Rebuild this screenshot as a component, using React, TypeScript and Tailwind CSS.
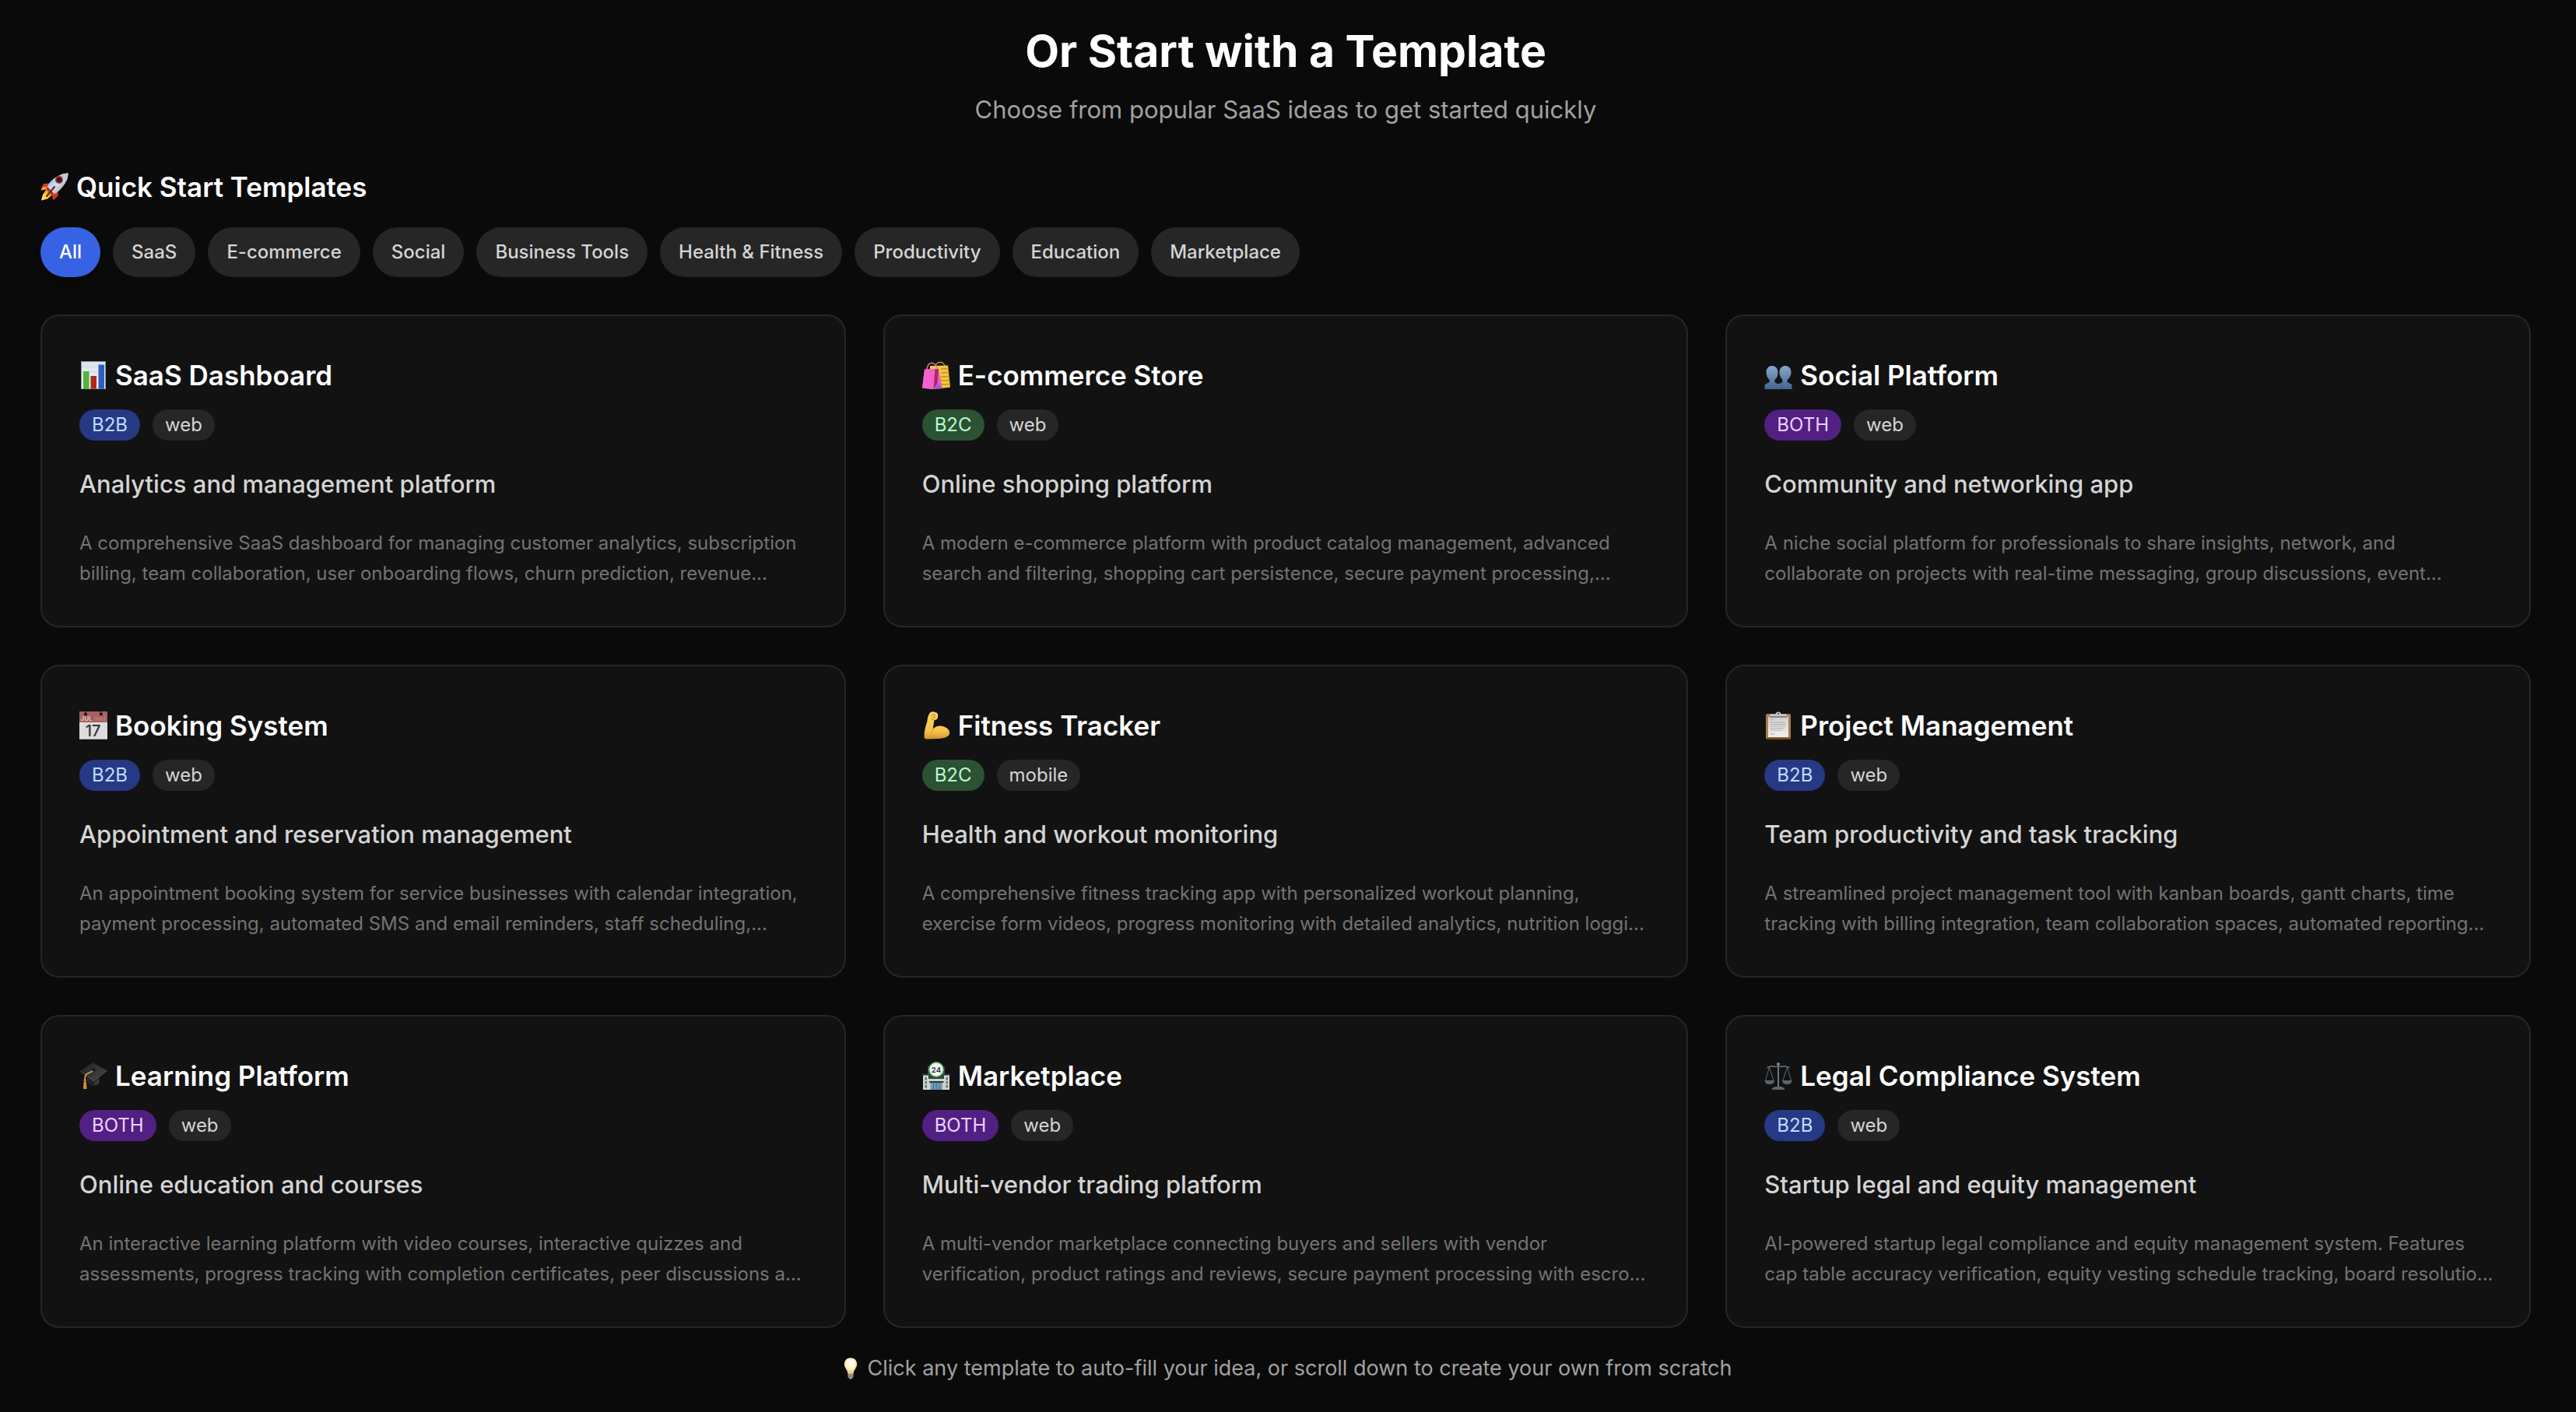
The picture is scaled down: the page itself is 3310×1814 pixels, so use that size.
import { useState } from 'react';
import type { ReactNode } from 'react';

type Audience = 'B2B' | 'B2C' | 'BOTH';

type Template = {
  icon: ReactNode;
  title: string;
  audience: Audience;
  platform: string;
  tagline: string;
  summary: [string, string];
};

function Emoji({ size = 'size-9', children }: { size?: 'size-9' | 'size-7'; children: ReactNode }) {
  return (
    <svg viewBox="0 0 36 36" aria-hidden="true" className={size === 'size-9' ? 'size-9 shrink-0' : 'size-7 shrink-0'}>
      {children}
    </svg>
  );
}

const Rocket = () => (
  <Emoji>
    <defs>
      <linearGradient id="rocketBody" x1="0" y1="0" x2="1" y2="1">
        <stop offset="0" stopColor="#5d9be0" />
        <stop offset="0.5" stopColor="#d5e2ef" />
        <stop offset="1" stopColor="#77808c" />
      </linearGradient>
      <linearGradient id="rocketFlame" x1="1" y1="0" x2="0" y2="1">
        <stop offset="0" stopColor="#e2501c" />
        <stop offset="0.5" stopColor="#f9c22b" />
        <stop offset="1" stopColor="#fff08a" />
      </linearGradient>
    </defs>
    <path d="M13 13.5 4 14 0.5 22.5 8.5 21Z" fill="#e03a20" />
    <path d="M0.5 22.5 2.5 18 9 18.5 8.5 21Z" fill="#f3a02c" />
    <path d="M22 21.500 23 29 16.500 35.500 14.500 27Z" fill="#d8301d" />
    <path d="M7.500 21 3 28 1 35.500 9 33.500 15 28.500Z" fill="url(#rocketFlame)" />
    <path d="M35.500 0.500C27 0.500 16 6 10 15L7.500 20.500 15 28.500 21 25.500C30 18.500 35.500 9 35.500 0.500Z" fill="url(#rocketBody)" />
    <path d="M35.500 0.500C31.500 0.500 28 1.500 25 3L33.500 10.500C35 7 35.500 3.500 35.500 0.500Z" fill="#b9cbe0" />
    <path d="M15 28.500 7.500 20.500 9 18 17.500 27Z" fill="#98312a" />
    <path d="M18 18 8 30" stroke="#7d2018" strokeWidth="2.200" strokeLinecap="round" />
    <circle cx="24" cy="9" r="5" fill="#b52a24" />
    <circle cx="24" cy="9" r="3.200" fill="#241f2b" />
  </Emoji>
);

const Chart = () => (
  <Emoji>
    <defs>
      <linearGradient id="chartPaper" x1="0" y1="0" x2="0" y2="1">
        <stop offset="0" stopColor="#d9e1ea" />
        <stop offset="1" stopColor="#f4f7fa" />
      </linearGradient>
    </defs>
    <rect x="2.500" y="0.500" width="31" height="35" fill="url(#chartPaper)" stroke="#8e959d" strokeWidth="1" />
    <path d="M3 7h30M3 14h30M3 21h30M3 28h30" stroke="#c5cfda" strokeWidth="0.600" />
    <rect x="5" y="13" width="7.500" height="22.500" fill="#50b53c" />
    <rect x="14.500" y="19" width="7.500" height="16.500" fill="#b3271d" />
    <rect x="24.500" y="4.500" width="7.500" height="31" fill="#2c5fc4" />
  </Emoji>
);

const Bags = () => (
  <Emoji>
    <path d="M17 8C17 -1 29 -1 29 8" fill="none" stroke="#c99a35" strokeWidth="1.500" />
    <path d="M10 6 33 5.500 36 33.500 24 35 10 30Z" fill="#f0c93c" />
    <path d="M24 10 34 9.500M24 15 34.500 14.500M24 20 35 19.500M24 25 35.500 24.500M25 30 36 29.500" stroke="#c78e2e" strokeWidth="1.400" />
    <path d="M6 12C6 -1 18 -1 20 12" fill="none" stroke="#d87fae" strokeWidth="1.500" />
    <path d="M3 10.500 21 10 26 35 14 36 0 34.500Z" fill="#ec5cc5" />
    <path d="M3 10.500 16.500 10 14.500 36 0 34.500Z" fill="#f55fcd" />
    <path d="M16.500 10 21 10 19.500 28 14.500 36Z" fill="#a92a68" />
    <path d="M14.500 36 19.500 28 26 35Z" fill="#a15fc4" />
    <path d="M2.500 16h12M2 21h12M1.500 26h12M1 31h12" stroke="#fa86d8" strokeWidth="0.700" strokeDasharray="1 2" />
  </Emoji>
);

const People = () => (
  <Emoji>
    <defs>
      <linearGradient id="bust" x1="0" y1="0" x2="0" y2="1">
        <stop offset="0" stopColor="#86a8c9" />
        <stop offset="1" stopColor="#41658f" />
      </linearGradient>
    </defs>
    <path d="M27 6C22.500 6 19.500 9.500 19.500 14.500 19.500 19 21.500 22 23.500 24L23 27.500 15 30V36H35.500V30.500C34 28.500 31 28 29.500 27L29.500 24C32 22 34.500 19 34.500 14.500 34.500 9.500 31.500 6 27 6Z" fill="url(#bust)" />
    <path d="M10 6C5.500 6 2.500 9.500 2.500 14.500 2.500 19 4.500 22 6.500 24V27C4.500 28.500 2 28.500 0.500 30.500V36H23V31.500C20 29 15.500 29 13.500 27V24C16 22 17.500 19 17.500 14.500 17.500 9.500 14.500 6 10 6Z" fill="url(#bust)" />
    <path d="M20.500 29.500 23 32.500V36" fill="none" stroke="#365579" strokeWidth="0.800" />
  </Emoji>
);

const Calendar = () => (
  <Emoji>
    <rect width="36" height="36" fill="#dcdcdc" />
    <rect width="36" height="14" fill="#a86060" />
    <path d="M0 35.500H36" stroke="#a9a9a9" />
    <circle cx="8" cy="3.500" r="2" fill="#171010" />
    <circle cx="28" cy="3.500" r="2" fill="#171010" />
    <path d="M8 0v3M26 0l2 3" stroke="#171010" strokeWidth="1" />
    <text x="1.500" y="12" fontFamily="Inter, sans-serif" fontSize="8" fontWeight="600" fill="#e0c7c7">JUL</text>
    <path d="M20 7v5M22.500 7v5M25 7v5M27.500 7v5M30 7v5M32.500 5.500v6.500" stroke="#c08e8e" strokeWidth="0.800" />
    <text x="17.500" y="32" textAnchor="middle" fontFamily="Inter, sans-serif" fontSize="20" fontWeight="500" fill="#333333">17</text>
  </Emoji>
);

const Arm = () => (
  <Emoji>
    <defs>
      <linearGradient id="skin" x1="0" y1="0" x2="0" y2="1">
        <stop offset="0" stopColor="#fbd567" />
        <stop offset="0.700" stopColor="#f5c54b" />
        <stop offset="1" stopColor="#d3932c" />
      </linearGradient>
    </defs>
    <path d="M9 3C10.500 0.500 13 0 15 0.500L19.500 2C20.500 5 20.500 8 19 10L15.500 11.500C15 15 14 18 14 22.500 17 19 22 17.500 26.500 19 32.500 20.500 36 25 35 29 33.500 33.500 27 34.500 21 35L6 35.500C3.500 35.500 2.500 34.500 2.500 32 2.500 25 4.500 18 6.500 12.500 6.500 9 7.500 6 9 3Z" fill="url(#skin)" />
    <path d="M11.500 5C13 3.500 15 3.500 16.500 4.500M13.500 7.500C15 6 17 6.500 17.500 8M15.500 11C14 11 12.500 10.500 12 9" fill="none" stroke="#b5751d" strokeWidth="1" strokeLinecap="round" />
    <path d="M14 22.500C13.500 24.500 12.500 26 11.500 27" fill="none" stroke="#cf9130" strokeWidth="1" strokeLinecap="round" />
  </Emoji>
);

const Clipboard = () => (
  <Emoji>
    <defs>
      <linearGradient id="sheet" x1="0" y1="0" x2="0" y2="1">
        <stop offset="0" stopColor="#cfcfcf" />
        <stop offset="1" stopColor="#f1f1f1" />
      </linearGradient>
    </defs>
    <rect x="2" y="3" width="32" height="33" rx="2" fill="#a97f48" />
    <path d="M3 33.500H33V34.500C33 35.500 32.500 36 31.500 36H4.500C3.500 36 3 35.500 3 34.500Z" fill="#75501f" />
    <rect x="5" y="6.500" width="26" height="26.500" fill="url(#sheet)" />
    <path d="M7.500 14h19M7.500 16.500h20M7.500 19h20M7.500 21.500h18M7.500 24h16M7.500 10.500h4M7.500 29h6" stroke="#a9a9a9" strokeWidth="0.900" />
    <path d="M7 5.500C7 4 8 3.500 9.500 3.500H14.500C15 1.500 16 0.500 18 0.500S21 1.500 21.500 3.500H26.500C28 3.500 29 4 29 5.500V7.500H7Z" fill="#c3c7cf" />
    <path d="M7 7H29" stroke="#77695f" strokeWidth="1.500" />
    <circle cx="18" cy="2.800" r="1" fill="#3f4552" />
  </Emoji>
);

const GraduationCap = () => (
  <Emoji>
    <defs>
      <linearGradient id="board" x1="0" y1="0" x2="1" y2="1">
        <stop offset="0" stopColor="#1f1f1f" />
        <stop offset="1" stopColor="#4a4a4a" />
      </linearGradient>
    </defs>
    <path d="M10 17V27C14 31 21 32 25 28.500V21Z" fill="#232323" />
    <path d="M20 26 25.500 21.500V27C24 29.500 21 30.500 19 30.500Z" fill="#3a3a3a" />
    <path d="M17.500 1 35.500 11.500 18.500 25 1 12Z" fill="url(#board)" />
    <path d="M1 12 18.500 25 35.500 11.500" fill="none" stroke="#606060" strokeWidth="0.700" />
    <ellipse cx="18" cy="10.500" rx="2.800" ry="1.900" fill="#191919" />
    <path d="M17 12 10 15.500C7.500 17 7 19 7 23" fill="none" stroke="#d39a3b" strokeWidth="1.900" />
    <path d="M5.800 23H8.500L9.500 34.500C8.500 35.500 6 35.500 5 34.500Z" fill="#d9912f" />
    <path d="M5.500 25.500H9" stroke="#7d4e14" strokeWidth="0.900" />
  </Emoji>
);

const Store = () => (
  <Emoji>
    <rect x="7" y="6" width="22" height="16" fill="#35485a" />
    <rect x="7" y="14" width="22" height="8" fill="#35533f" />
    <rect x="1" y="17" width="34" height="19" fill="#d4d3bf" />
    <rect x="8" y="17" width="20" height="5" fill="#30483a" />
    <path d="M0 16.500H8M28 16.500H36" stroke="#2c3159" strokeWidth="1.800" />
    <path d="M3.500 20h2.500v3.500H3.500zM3.500 25h2.500v3.500H3.500zM3.500 30h2.500v3.500H3.500zM30.500 20H33v3.500h-2.500zM30.500 25H33v3.500h-2.500zM30.500 30H33v3.500h-2.500z" fill="#527a9a" />
    <rect x="10.500" y="26" width="15.500" height="10" fill="#6f9cba" />
    <path d="M14.500 27v9M18.200 27v9M22 27v9" stroke="#3a6180" strokeWidth="0.800" />
    <path d="M9 26H27.500" stroke="#2c3159" strokeWidth="2" />
    <circle cx="18" cy="10" r="9.300" fill="#f5f8f1" stroke="#55a866" strokeWidth="1.500" />
    <text x="18" y="13.500" textAnchor="middle" fontFamily="Inter, sans-serif" fontSize="9.500" fontWeight="700" fill="#34395f">24</text>
  </Emoji>
);

const Scales = () => (
  <Emoji>
    <g fill="none" stroke="#66737d" strokeLinecap="round" strokeLinejoin="round">
      <path d="M18 3V32" strokeWidth="2" />
      <path d="M4 7.500C10 3.500 13 7.500 18 6 23 7.500 26 3.500 32 7.500" strokeWidth="1.500" />
      <path d="M6.500 7 1.500 24M6.500 7 12 24M29.500 7 24 24M29.500 7 34.500 24" strokeWidth="0.900" />
    </g>
    <path d="M0.500 24H13C12.500 28 10 29 6.800 29S1 28 0.500 24ZM23 24H35.500C35 28 32.500 29 29.200 29S23.500 28 23 24Z" fill="#59656f" />
    <circle cx="18" cy="3" r="2" fill="#7f8b94" />
    <path d="M14 32H22L26 34V36H10V34Z" fill="#59656f" />
  </Emoji>
);

const Bulb = () => (
  <Emoji size="size-7">
    <defs>
      <radialGradient id="bulbGlow" cx="0.500" cy="0.350" r="0.600">
        <stop offset="0" stopColor="#ffffff" />
        <stop offset="0.550" stopColor="#fdf3c9" />
        <stop offset="1" stopColor="#e6c877" />
      </radialGradient>
    </defs>
    <path d="M18 0.500C11.500 0.500 7.500 5 7.500 11 7.500 17 12.500 20 13.500 27H22.500C23.500 20 28.500 17 28.500 11 28.500 5 24.500 0.500 18 0.500Z" fill="url(#bulbGlow)" />
    <path d="M13.500 26.500H22.500V32L20 34.500V35.500H16V34.500L13.500 32Z" fill="#a2a4a6" />
    <path d="M13.500 29H22.500M14 31.500H22" stroke="#616365" strokeWidth="1" />
  </Emoji>
);

const categories = [
  'All',
  'SaaS',
  'E-commerce',
  'Social',
  'Business Tools',
  'Health & Fitness',
  'Productivity',
  'Education',
  'Marketplace',
];

const templates: Template[] = [
  {
    icon: <Chart />,
    title: 'SaaS Dashboard',
    audience: 'B2B',
    platform: 'web',
    tagline: 'Analytics and management platform',
    summary: [
      'A comprehensive SaaS dashboard for managing customer analytics, subscription',
      'billing, team collaboration, user onboarding flows, churn prediction, revenue...',
    ],
  },
  {
    icon: <Bags />,
    title: 'E-commerce Store',
    audience: 'B2C',
    platform: 'web',
    tagline: 'Online shopping platform',
    summary: [
      'A modern e-commerce platform with product catalog management, advanced',
      'search and filtering, shopping cart persistence, secure payment processing,...',
    ],
  },
  {
    icon: <People />,
    title: 'Social Platform',
    audience: 'BOTH',
    platform: 'web',
    tagline: 'Community and networking app',
    summary: [
      'A niche social platform for professionals to share insights, network, and',
      'collaborate on projects with real-time messaging, group discussions, event...',
    ],
  },
  {
    icon: <Calendar />,
    title: 'Booking System',
    audience: 'B2B',
    platform: 'web',
    tagline: 'Appointment and reservation management',
    summary: [
      'An appointment booking system for service businesses with calendar integration,',
      'payment processing, automated SMS and email reminders, staff scheduling,...',
    ],
  },
  {
    icon: <Arm />,
    title: 'Fitness Tracker',
    audience: 'B2C',
    platform: 'mobile',
    tagline: 'Health and workout monitoring',
    summary: [
      'A comprehensive fitness tracking app with personalized workout planning,',
      'exercise form videos, progress monitoring with detailed analytics, nutrition loggi...',
    ],
  },
  {
    icon: <Clipboard />,
    title: 'Project Management',
    audience: 'B2B',
    platform: 'web',
    tagline: 'Team productivity and task tracking',
    summary: [
      'A streamlined project management tool with kanban boards, gantt charts, time',
      'tracking with billing integration, team collaboration spaces, automated reporting...',
    ],
  },
  {
    icon: <GraduationCap />,
    title: 'Learning Platform',
    audience: 'BOTH',
    platform: 'web',
    tagline: 'Online education and courses',
    summary: [
      'An interactive learning platform with video courses, interactive quizzes and',
      'assessments, progress tracking with completion certificates, peer discussions a...',
    ],
  },
  {
    icon: <Store />,
    title: 'Marketplace',
    audience: 'BOTH',
    platform: 'web',
    tagline: 'Multi-vendor trading platform',
    summary: [
      'A multi-vendor marketplace connecting buyers and sellers with vendor',
      'verification, product ratings and reviews, secure payment processing with escro...',
    ],
  },
  {
    icon: <Scales />,
    title: 'Legal Compliance System',
    audience: 'B2B',
    platform: 'web',
    tagline: 'Startup legal and equity management',
    summary: [
      'AI-powered startup legal compliance and equity management system. Features',
      'cap table accuracy verification, equity vesting schedule tracking, board resolutio...',
    ],
  },
];

const audienceStyles: Record<Audience, string> = {
  B2B: 'bg-[#263985] text-blue-200',
  B2C: 'bg-[#2a5233] text-green-200',
  BOTH: 'bg-[#521f82] text-purple-200',
};

function Badge({ tone, children }: { tone: string; children: ReactNode }) {
  return <span className={`rounded-full px-4 text-[24px] leading-[40px] ${tone}`}>{children}</span>;
}

function TemplateCard({ template }: { template: Template }) {
  return (
    <button
      type="button"
      className="flex min-w-0 cursor-pointer flex-col rounded-3xl border-2 border-neutral-800 bg-[#121212] py-12 pr-8 pl-12 text-left hover:border-neutral-600"
    >
      <span className="flex items-center gap-2.5 text-[35px] leading-[56px] font-semibold text-white">
        {template.icon}
        {template.title}
      </span>
      <span className="mt-4 flex gap-4">
        <Badge tone={audienceStyles[template.audience]}>{template.audience}</Badge>
        <Badge tone="bg-neutral-800 text-neutral-300">{template.platform}</Badge>
      </span>
      <span className="mt-8 text-[31px] leading-[48px] font-medium text-neutral-300">{template.tagline}</span>
      <span className="mt-8 text-[24px] leading-[39px] text-neutral-500">
        {template.summary[0]}
        <br />
        {template.summary[1]}
      </span>
    </button>
  );
}

export default function App() {
  const [active, setActive] = useState('All');

  return (
    <main className="min-h-screen bg-[#0a0a0a] pt-[30px] pr-[58px] pb-8 pl-[52px] font-['Inter',sans-serif]">
      <div className="mx-auto max-w-[3200px]">
        <header className="text-center">
          <h1 className="text-[57px] leading-[72px] font-bold text-white">Or Start with a Template</h1>
          <p className="mt-4 text-[31px] leading-[46px] text-neutral-400">
            Choose from popular SaaS ideas to get started quickly
          </p>
        </header>

        <section className="mt-[52px]" aria-labelledby="quick-start">
          <h2 id="quick-start" className="flex items-center gap-2.5 text-[35px] leading-[48px] font-semibold text-white">
            <Rocket />
            Quick Start Templates
          </h2>

          <div className="mt-7 flex flex-wrap gap-4">
            {categories.map((category) => (
              <button
                key={category}
                type="button"
                aria-pressed={active === category}
                onClick={() => setActive(category)}
                className={`cursor-pointer rounded-full px-6 py-4 text-[24px] leading-[32px] font-medium ${
                  active === category
                    ? 'bg-[#3762e3] text-white shadow-lg'
                    : 'bg-neutral-800 text-neutral-300 hover:bg-neutral-700'
                }`}
              >
                {category}
              </button>
            ))}
          </div>

          <div className="mt-12 grid grid-cols-1 gap-12 md:grid-cols-2 xl:grid-cols-3">
            {templates.map((template) => (
              <TemplateCard key={template.title} template={template} />
            ))}
          </div>
        </section>

        <footer className="mt-8 flex items-center justify-center gap-2 text-[27px] leading-[40px] text-neutral-400">
          <Bulb />
          <p>Click any template to auto-fill your idea, or scroll down to create your own from scratch</p>
        </footer>
      </div>
    </main>
  );
}
